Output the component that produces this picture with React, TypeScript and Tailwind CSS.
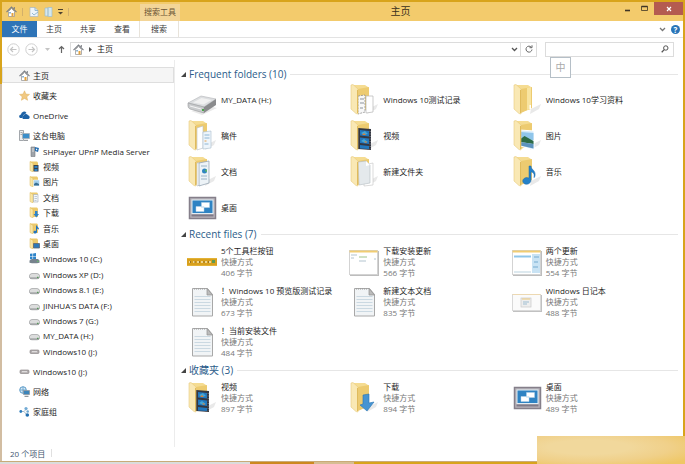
import type { ReactNode } from "react";

type Kind =
  | "drive" | "docs" | "reports" | "desktop" | "notes" | "video" | "blank" | "empty"
  | "picture" | "music" | "download" | "banner" | "text" | "shotA" | "shotB" | "shotC";

function FolderBase({ children }: { children?: ReactNode }) {
  return (
    <>
      <path d="M19 25 29 20 27 25 18 30z" fill="#e9e9e9" />
      <path d="M3 1h13l3 2v22l-10 3z" fill="#f5dc92" />
      <path d="M9 5l11-2v21l-11 5z" fill="#edcb70" />
      {children}
      <path d="M2 1l2-.5 5 4.500V30l-2-.5L2 25z" fill="#f9e8b4" stroke="#e8cb7c" strokeWidth=".6" />
      <path d="M8.500 6v23" stroke="#e0bb5c" strokeWidth="1" />
    </>
  );
}

function DesktopArt() {
  return (
    <>
      <rect x="2.500" y="5.500" width="26" height="21" fill="#b9b4bb" stroke="#857f8a" strokeWidth="1.500" />
      <rect x="5" y="8" width="21" height="13.500" fill="#2f83c3" stroke="#e2edf4" />
      <rect x="4.500" y="22.500" width="22" height="2" fill="#807a88" />
      <path d="M14.500 10.500h8v5h-8zM9 14.500h8v5H9z" fill="#fff" stroke="#b7d4ea" strokeWidth=".5" />
    </>
  );
}

function NotePage() {
  return (
    <>
      <path d="M5.500 2.500h15l5 6V30h-20z" fill="#f1f4f6" stroke="#a8a8a8" />
      <path d="M20 2.500v6.500h5.500z" fill="#bcbcbc" stroke="#8f8f8f" strokeWidth=".7" />
      <path d="M7.500 10.500h16M7.500 13.500h16M7.500 16.500h16M7.500 19.500h16M7.500 22.500h16M7.500 25.500h16" stroke="#cbd9e2" />
      <path d="M7 3h12" stroke="#999" strokeDasharray="1 1" />
    </>
  );
}

function BigIcon({ kind }: { kind: Kind }) {
  let art: ReactNode;
  switch (kind) {
    case "drive":
      art = (
        <>
          <path d="M4 27l11 4 15-7-4-1z" fill="#e9e9e9" />
          <path d="M1 19 14 12l15 3-12 8z" fill="#dcdee0" stroke="#b4b6b8" strokeWidth=".6" />
          <path d="M6 18.500 14.500 14l10 2-8 4.500z" fill="#f1f1f1" />
          <path d="M1 19l16 4v6L3 25q-2-1-2-3z" fill="#c9cbcd" stroke="#97999b" strokeWidth=".6" />
          <path d="M17 23l12-8v6l-12 8z" fill="#8a8b8d" />
          <path d="M3 22l11 3" stroke="#f4f4f4" />
          <rect x="15" y="25" width="2" height="2" fill="#49a648" />
        </>
      );
      break;
    case "docs":
      art = (
        <FolderBase>
          <path d="M10 8l6-2v22l-6 2z" fill="#fff" stroke="#b8c0c8" strokeWidth=".6" />
          <path d="M16 12l8-1v17l-8 1z" fill="#eef5fb" stroke="#a9bdcc" strokeWidth=".6" />
          <path d="M17.500 15h5M17.500 18h5M17.500 24h4" stroke="#8eb6d4" />
          <path d="M17.500 21h2" stroke="#e7a04b" />
        </FolderBase>
      );
      break;
    case "reports":
      art = (
        <FolderBase>
          <path d="M10 7l9-1v21l-9 3z" fill="#fff" stroke="#b5bcc4" strokeWidth=".6" />
          <path d="M12 7l10-2v22l-10 3z" fill="#edf3f7" stroke="#8e9eac" strokeWidth=".7" />
          <circle cx="17.500" cy="15" r="2.500" fill="#2f86c1" />
          <path d="M17.500 15l2.500 1v-3z" fill="#5fb768" />
          <path d="M14 10h6M14 20h6M14 23h6" stroke="#9ab3c6" />
        </FolderBase>
      );
      break;
    case "notes":
      art = (
        <FolderBase>
          <path d="M9 12l7-1v17l-7 2z" fill="#f8f8f8" stroke="#8f8f8f" strokeDasharray="2 1" strokeWidth=".8" />
          <path d="M17 12h7v16l-7 1z" fill="#fff" stroke="#b4b4b4" strokeWidth=".7" />
          <path d="M11 15h4M11 19h4M11 24h3" stroke="#8b939b" />
        </FolderBase>
      );
      break;
    case "blank":
      art = (
        <FolderBase>
          <path d="M15 9l9-2v22l-9 1z" fill="#fff" stroke="#c4c4c4" strokeWidth=".6" />
          <path d="M9 6l8-1 4 4v18l-11 2z" fill="#e4e9ec" stroke="#b4bcc1" strokeWidth=".6" />
          <path d="M17 5v5l4-1z" fill="#fff" />
        </FolderBase>
      );
      break;
    case "video":
      art = (
        <FolderBase>
          <path d="M9 8l13 1v21l-13-1z" fill="#343741" />
          <path d="M11 10l9 1v5.500l-9-1zM11 17.500l9 1V24l-9-1zM11 25l9 1v3l-9-.5z" fill="#2277bd" />
          <path d="M12 13l4-2 3 3-4 1zM12 21l3-2 4 3-3 1z" fill="#45a5d5" />
          <path d="M13 15l2-2 2 2zM15 22l2-1 1 2z" fill="#d5803a" />
          <path d="M21.200 11v18" stroke="#a8acb2" strokeDasharray="1 1.500" strokeWidth=".7" />
        </FolderBase>
      );
      break;
    case "picture":
      art = (
        <FolderBase>
          <path d="M8 10l14 1v19L8 26z" fill="#d5eafa" stroke="#fff" />
          <path d="M8.500 12l13 1v7l-13-1z" fill="#8fc5ea" />
          <path d="M8.500 19l4-3 9 5v3l-13-2z" fill="#2d6b45" />
          <path d="M8.500 22l13 2v4.500l-13-3z" fill="#5d93bd" />
        </FolderBase>
      );
      break;
    case "empty":
      art = (
        <FolderBase>
          <path d="M15 4l4-1v22l-4 1z" fill="#f8e4a0" />
          <path d="M17.500 21h1.500v4h-1.500z" fill="#fff" />
        </FolderBase>
      );
      break;
    case "music":
      art = (
        <>
          <FolderBase />
          <path
            d="M17 10h2c0 4 5 4 4 10-1 2-1 2-1 1 1-4-2-5-3-5v8c0 3-3 5-6 4-3-1-3-5 0-6 2-1 3 0 4 0z"
            fill="#2681c8"
            stroke="#1b68a9"
            strokeWidth=".5"
          />
        </>
      );
      break;
    case "download":
      art = (
        <>
          <FolderBase />
          <path d="M14 13l6-1v9l5-1-7 9-7-6 3-1z" fill="#4694d2" stroke="#2873b1" strokeWidth=".6" />
        </>
      );
      break;
    case "desktop":
      art = <DesktopArt />;
      break;
    case "text":
      art = <NotePage />;
      break;
    case "banner":
      art = (
        <>
          <rect y="12" width="30" height="8" fill="#d8a01d" />
          <path d="M0 12.500h30M0 19.500h30" stroke="#e3b236" />
          <path d="M2 16h25" stroke="#efd58d" strokeWidth="2" strokeDasharray="2 2" />
          <path d="M3 16h25" stroke="#9a7421" strokeDasharray="1 3.500" strokeWidth="2" />
          <rect x="25" y="14" width="3" height="3" fill="#5d9a52" />
        </>
      );
      break;
    case "shotA":
      art = (
        <>
          <rect x="1" y="5" width="29" height="25" fill="#bdbdbd" />
          <rect x=".5" y="4.500" width="28" height="24" fill="#fff" stroke="#d3d3d3" />
          <path d="M.5 5.500h28" stroke="#f1cd72" strokeWidth="2" />
          <path d="M2 9h6M2 12h3M10 15h7M25 13h2" stroke="#b3c4cf" />
          <path d="M10 11h8" stroke="#9ec48b" />
        </>
      );
      break;
    case "shotB":
      art = (
        <>
          <rect x="1" y="5" width="29" height="25" fill="#bdbdbd" />
          <rect x=".5" y="4.500" width="28" height="24" fill="#fff" stroke="#d3d3d3" />
          <path d="M.5 5.500h28" stroke="#f1cd72" strokeWidth="2" />
          <path d="M2 10.500h17" stroke="#8ec6ea" strokeWidth="2" />
          <path d="M20 8h8v19h-8z" fill="#c9e3f4" />
          <path d="M22 11h5M22 16h4M21 21h5" stroke="#75abd0" />
          <path d="M2 26h17" stroke="#dde9ef" strokeWidth="2" />
        </>
      );
      break;
    case "shotC":
      art = (
        <>
          <rect x="1" y="9" width="29" height="17" fill="#c1c1c1" />
          <rect x=".5" y="8.500" width="28" height="16" fill="#fbfbfb" stroke="#d9d9d9" />
          <path d="M.5 8.500h28" stroke="#edd9b2" />
          <rect x="9" y="12" width="10" height="9" fill="#eee" stroke="#c9c9c9" strokeWidth=".7" />
          <path d="M10 13h8" stroke="#ecc97b" />
          <path d="M11 16h6M11 18h4" stroke="#9ebdd1" />
        </>
      );
      break;
  }
  return (
    <svg viewBox="0 0 30 32" className="h-8 w-[30px] shrink-0" aria-hidden="true">
      {art}
    </svg>
  );
}

type SmallKind =
  | "home" | "star" | "cloud" | "pc" | "server" | "fVideo" | "fPicture" | "fDoc" | "fDown"
  | "fMusic" | "fDesk" | "windows" | "disk" | "usb" | "network" | "group";

function SmallIcon({ kind }: { kind: SmallKind }) {
  const folder = (
    <>
      <path d="M1 .5h7l1 1V10H3z" fill="#edca6c" />
      <path d="M1 .5l3 2V11l-3-1.500z" fill="#f9e6a7" stroke="#dfba5b" strokeWidth=".5" />
    </>
  );
  const art: Record<SmallKind, ReactNode> = {
    home: (
      <>
        <path d="M2.500 5.500V10.500h6V5.500l-3-3z" fill="#fff" stroke="#9b9b9b" strokeWidth=".8" />
        <path d="M.5 6.200 5.500 1l5 5.200M8.300 1v2" fill="none" stroke="#7b7f85" strokeWidth="1.100" />
        <path d="M5.500 7h2v3.500h-2z" fill="#e5a23c" />
        <path d="M3.300 6h1.500v1.500H3.300z" fill="#6a9fc6" />
      </>
    ),
    star: <path d="M5.500.8l1.400 3.300 3.600.3-2.700 2.400.8 3.500-3.100-1.900-3.100 1.900.8-3.500L.5 4.400l3.600-.3z" fill="#f1c982" stroke="#dfb05f" strokeWidth=".5" />,
    cloud: (
      <>
        <path d="M1 8a2 2 0 0 1 1-3.600A3 3 0 0 1 7.500 3L4.500 5 3 8z" fill="#1d62a6" />
        <path d="M4 9a2 2 0 0 1 .5-3.500 2.500 2.500 0 0 1 4.500-.3A2 2 0 0 1 9.500 9z" fill="#1d62a6" />
      </>
    ),
    pc: (
      <>
        <path d="M.5.5h4v10h-4z" fill="#eee" stroke="#8d9298" strokeWidth=".8" />
        <path d="M1.500 2.500h2M1.500 4.500h2" stroke="#777" strokeWidth=".6" />
        <path d="M3.500 3.500h7v5h-7z" fill="#3c8ec9" stroke="#a4afb8" strokeWidth=".8" />
        <path d="M5 10.300h4" stroke="#85898e" />
      </>
    ),
    server: (
      <>
        <path d="M2 1h4v9.500H2z" fill="#9fa4aa" stroke="#75797f" strokeWidth=".6" />
        <path d="M3 3h2M3 5h2" stroke="#eee" strokeWidth=".8" />
        <path d="M6 1l4 1-1 4-3-1z" fill="#2871b4" />
        <path d="M7 2.500l1.500 1L7 4.500z" fill="#fff" />
      </>
    ),
    fVideo: <>{folder}<path d="M4.500 4h5v6.500h-5z" fill="#3c414c" /><path d="M5.500 5h3v2h-3zM5.500 8h3v2h-3z" fill="#2d82c4" /></>,
    fPicture: <>{folder}<path d="M4.500 4h6v6h-6z" fill="#a6d1ee" stroke="#fff" strokeWidth=".5" /><path d="M5 8l2-1.500L10 8v1.500H5z" fill="#3a7094" /></>,
    fDoc: <>{folder}<path d="M4.500 2.500h4.500V10H4.500z" fill="#f3f6f9" stroke="#a3acb5" strokeWidth=".6" /><path d="M5.500 4.500h2.500M5.500 6.500h2.500M5.500 8.500h2" stroke="#9ab0c2" strokeWidth=".6" /></>,
    fDown: <>{folder}<path d="M6 4h2.500v3H10l-2.700 3.500L4.500 7H6z" fill="#2d82c8" /></>,
    fMusic: <>{folder}<path d="M7 2.500h1c0 1.500 2.500 2 2 4.500-.5-1-1-1.200-2-1.200V9c-.5 2-3.500 2-3.500 0 0-1.200 1.500-1.500 2.500-1z" fill="#2474bd" /></>,
    fDesk: <>{folder}<path d="M4.500 5.500h6v4.500h-6z" fill="#2d78b7" stroke="#5c6470" strokeWidth=".8" /></>,
    windows: (
      <>
        <path d="M1 .8l2.500-.3v2.700H1zM4.100.4L7 0v3.200H4.100zM1 3.800h2.500v2.700L1 6.200zM4.100 3.800H7V7l-2.900-.4z" fill="#2e84c9" />
        <path d="M.5 7.500L3 6h6l1.500 1.500v2.200q-5 1-10 0z" fill="#77838d" />
        <path d="M8 8.300h1.500" stroke="#63c864" />
      </>
    ),
    disk: (
      <>
        <path d="M.5 6.500Q1 4.500 3 4.500h5q2 0 2.500 2v2Q10 9.800 8 9.800H3Q1 9.800.5 8.500z" fill="#dcdddd" stroke="#909294" strokeWidth=".6" />
        <path d="M1 9h9" stroke="#85888b" strokeWidth=".9" />
        <path d="M8 8.300h1.500" stroke="#3e9141" />
      </>
    ),
    usb: (
      <>
        <rect x="1" y="4" width="9" height="3.500" rx="1" fill="#b4afb0" stroke="#7f7b7c" strokeWidth=".6" />
        <path d="M3 5.700h5" stroke="#f6f6f6" strokeWidth=".8" />
      </>
    ),
    network: (
      <>
        <circle cx="4" cy="4" r="3.300" fill="#d7eaf6" stroke="#3c86bd" strokeWidth=".8" />
        <path d="M1 4h6M4 .7v6.600" stroke="#3c86bd" strokeWidth=".6" />
        <path d="M4.500 4.500h6v4h-6z" fill="#3b84ba" stroke="#8f989f" strokeWidth=".8" />
        <path d="M5.500 10.300h4" stroke="#777d83" />
      </>
    ),
    group: (
      <>
        <path d="M2 5.500h3l3-3M5 5.500L8 9" stroke="#a5bccd" fill="none" />
        <circle cx="1.800" cy="5.500" r="1.400" fill="#2d7dbd" />
        <circle cx="7" cy="2.500" r="1.600" fill="#72abd5" />
        <circle cx="8.700" cy="5.500" r="1.300" fill="#6fa7cf" />
        <circle cx="8.300" cy="9" r="1.800" fill="#236fb0" />
      </>
    ),
  };
  return (
    <svg viewBox="0 0 11 11" className="size-[11px] shrink-0" aria-hidden="true">
      {art[kind]}
    </svg>
  );
}

function Chevron({ tone }: { tone: string }) {
  return (
    <svg viewBox="0 0 7 5" className="h-[5px] w-[7px] shrink-0" aria-hidden="true">
      <path d="M1 1l2.500 2.500L6 1" fill="none" stroke={tone} strokeWidth="1.300" />
    </svg>
  );
}

const tree: [SmallKind, string][] = [
  ["server", "SHPlayer UPnP Media Server"],
  ["fVideo", "视频"],
  ["fPicture", "图片"],
  ["fDoc", "文档"],
  ["fDown", "下载"],
  ["fMusic", "音乐"],
  ["fDesk", "桌面"],
  ["windows", "Windows 10 (C:)"],
  ["disk", "Windows XP (D:)"],
  ["disk", "Windows 8.1 (E:)"],
  ["disk", "JINHUA'S DATA (F:)"],
  ["disk", "Windows 7 (G:)"],
  ["disk", "MY_DATA (H:)"],
  ["usb", "Windows10 (J:)"],
];

function RootLink({ icon, label }: { icon: SmallKind; label: string }) {
  return (
    <a href="#" className="flex h-[15px] items-center gap-[3px] pl-[17px]">
      <SmallIcon kind={icon} />
      {label}
    </a>
  );
}

type Item = { icon: Kind; name: string; size?: string };

const sections: { title: string; items: Item[] }[] = [
  {
    title: "Frequent folders (10)",
    items: [
      { icon: "drive", name: "MY_DATA (H:)" },
      { icon: "notes", name: "Windows 10测试记录" },
      { icon: "empty", name: "Windows 10学习资料" },
      { icon: "docs", name: "稿件" },
      { icon: "video", name: "视频" },
      { icon: "picture", name: "图片" },
      { icon: "reports", name: "文档" },
      { icon: "blank", name: "新建文件夹" },
      { icon: "music", name: "音乐" },
      { icon: "desktop", name: "桌面" },
    ],
  },
  {
    title: "Recent files (7)",
    items: [
      { icon: "banner", name: "5个工具栏按钮", size: "406 字节" },
      { icon: "shotA", name: "下载安装更新", size: "566 字节" },
      { icon: "shotB", name: "两个更新", size: "554 字节" },
      { icon: "text", name: "！Windows 10 预览版测试记录", size: "673 字节" },
      { icon: "text", name: "新建文本文档", size: "835 字节" },
      { icon: "shotC", name: "Windows 日记本", size: "488 字节" },
      { icon: "text", name: "！当前安装文件", size: "484 字节" },
    ],
  },
  {
    title: "收藏夹 (3)",
    items: [
      { icon: "video", name: "视频", size: "897 字节" },
      { icon: "download", name: "下载", size: "894 字节" },
      { icon: "desktop", name: "桌面", size: "489 字节" },
    ],
  },
];

function Section({ title, items }: { title: string; items: Item[] }) {
  return (
    <section>
      <h2 className="flex h-4 items-center gap-1 pr-[5px] pl-[6px] text-[10px] text-[#2b5c8a]">
        <button type="button" className="flex items-center gap-[3px]">
          <svg viewBox="0 0 5 5" className="size-[5px]" aria-hidden="true">
            <path d="M5 0v5H0z" fill="#444" />
          </svg>
          {title}
        </button>
        <span className="h-px flex-1 bg-[#e6e6e6]" />
      </h2>
      <ul className="grid grid-cols-3 pr-[9px] pl-3">
        {items.map((item) => (
          <li key={item.name}>
            <a href="#" className={item.size ? "flex h-10 items-center gap-1" : "flex h-9 items-center gap-1"}>
              <BigIcon kind={item.icon} />
              <span className="flex flex-col pb-[2px] leading-[11px] whitespace-nowrap">
                <span>{item.name}</span>
                {item.size && <span className="text-[#777]">快捷方式</span>}
                {item.size && <span className="text-[#777]">{item.size}</span>}
              </span>
            </a>
          </li>
        ))}
      </ul>
    </section>
  );
}

export default function App() {
  return (
    <div className="relative flex min-h-screen flex-col overflow-hidden bg-[#d8a41c] pt-[2px] font-['Open_Sans','Noto_Sans_CJK_SC',sans-serif] text-[8px] leading-[11px] text-[#1c1c1c]">
      <div className="flex flex-1 bg-[linear-gradient(to_right,transparent_50%,#d8a41c_50%),linear-gradient(to_bottom,#d8a41c_82px,#d2bda2_82px)] pr-[2px] pl-[2px]">
        <div className="flex min-w-0 flex-1 flex-col bg-white">
          <header className="relative flex h-[19px] items-center bg-[#f3cb6c]">
            <div className="flex flex-1 items-center gap-[5px] pl-1">
              <SmallIcon kind="home" />
              <span className="h-2 w-px bg-[#d3b06a]" />
              <button type="button" aria-label="属性" className="pl-[1px]">
                <svg viewBox="0 0 10 10" className="size-[10px]" aria-hidden="true">
                  <path d="M1 .5h5l3 3v6H1z" fill="#edf4f8" stroke="#a9b7be" strokeWidth=".7" />
                  <path d="M6 .5v3h3M3 6l2 2 4-3" fill="none" stroke="#7fa9c7" strokeWidth=".8" />
                </svg>
              </button>
              <button type="button" aria-label="新建文件夹">
                <svg viewBox="0 0 9 10" className="h-[10px] w-[9px]" aria-hidden="true">
                  <path d="M1 1h3v8H1zM4 .5h4v9H4z" fill="#d5e8ef" stroke="#9ebccb" strokeWidth=".7" />
                </svg>
              </button>
              <button type="button" aria-label="自定义快速访问工具栏">
                <svg viewBox="0 0 5 6" className="h-[6px] w-[5px]" aria-hidden="true">
                  <path d="M0 .5h5" stroke="#4d4130" />
                  <path d="M0 3h5L2.500 5.500z" fill="#4d4130" />
                </svg>
              </button>
              <span className="h-2 w-px bg-[#d3b06a]" />
            </div>
            <div className="absolute bottom-0 left-[138px] flex h-[17px] w-[40px] items-center justify-center bg-[#f3d598] pb-[2px] whitespace-nowrap text-[#6b5436]">
              搜索工具
            </div>
            <h1 className="pl-28 text-[10px] text-[#3a2f1c]">主页</h1>
            <div className="flex flex-1 items-start justify-end self-stretch">
              <button type="button" aria-label="最小化" className="flex h-[13px] w-[15px] items-center justify-center">
                <svg viewBox="0 0 7 7" className="size-[7px]" aria-hidden="true">
                  <path d="M1 5.500h5" stroke="#3f3526" strokeWidth="1.600" />
                </svg>
              </button>
              <button type="button" aria-label="最大化" className="flex h-[13px] w-[19px] items-center justify-center">
                <svg viewBox="0 0 7 7" className="size-[7px]" aria-hidden="true">
                  <path d="M.5 1.500h6" stroke="#3f3526" strokeWidth="1.500" />
                  <path d="M.5 1.500h6v4h-6z" fill="none" stroke="#3f3526" strokeWidth=".8" />
                </svg>
              </button>
              <button type="button" aria-label="关闭" className="flex h-[13px] w-[29px] items-center justify-center bg-[#b45b50]">
                <svg viewBox="0 0 6 6" className="size-[6px]" aria-hidden="true">
                  <path d="M1 1l4 4M5 1L1 5" stroke="#fff" strokeWidth="1.200" />
                </svg>
              </button>
            </div>
          </header>

          <nav aria-label="功能区" className="flex h-[17px] items-stretch border-b border-[#e3e3e3] text-[#3a3a3a]">
            <button type="button" className="w-[35px] bg-[#2e74b7] pb-[2px] text-white">文件</button>
            <button type="button" className="w-[34px] pb-[2px]">主页</button>
            <button type="button" className="w-[34px] pb-[2px]">共享</button>
            <button type="button" className="w-[34px] pb-[2px]">查看</button>
            <button type="button" className="w-[40px] border-x border-[#e8e3da] pb-[2px]">搜索</button>
            <div className="ml-auto flex items-center gap-[5px] pr-[3px]">
              <button type="button" aria-label="展开功能区">
                <Chevron tone="#777" />
              </button>
              <button type="button" aria-label="帮助" className="flex size-[9px] items-center justify-center rounded-full bg-[#2874b8] font-bold text-white">
                ?
              </button>
            </div>
          </nav>

          <div className="flex h-[22px] items-center pr-[9px] pl-[5px]">
            <button type="button" aria-label="后退">
              <svg viewBox="0 0 13 13" className="size-[13px]" aria-hidden="true">
                <circle cx="6.500" cy="6.500" r="5.700" fill="#fff" stroke="#cfcfcf" />
                <path d="M9.500 6.500h-6M6 4L3.500 6.500 6 9" fill="none" stroke="#c4c4c4" strokeWidth="1.200" />
              </svg>
            </button>
            <button type="button" aria-label="前进" className="ml-[5px]">
              <svg viewBox="0 0 13 13" className="size-[13px]" aria-hidden="true">
                <circle cx="6.500" cy="6.500" r="5.700" fill="#fff" stroke="#cfcfcf" />
                <path d="M3.500 6.500h6M7 4l2.500 2.500L7 9" fill="none" stroke="#c4c4c4" strokeWidth="1.200" />
              </svg>
            </button>
            <button type="button" aria-label="最近位置" className="ml-[7px]">
              <svg viewBox="0 0 5 3" className="h-[3px] w-[5px]" aria-hidden="true">
                <path d="M0 0h5L2.500 3z" fill="#c4c4c4" />
              </svg>
            </button>
            <button type="button" aria-label="上移" className="ml-[8px]">
              <svg viewBox="0 0 7 8" className="h-2 w-[7px]" aria-hidden="true">
                <path d="M3.500 8V1.500M1 4l2.500-2.500L6 4" fill="none" stroke="#666" strokeWidth="1.200" />
              </svg>
            </button>
            <div className="ml-[5px] flex h-[15px] flex-1 items-center border border-[#dcdcdc] pl-[2px]">
              <SmallIcon kind="home" />
              <svg viewBox="0 0 3 5" className="mr-[5px] ml-[5px] h-[5px] w-[3px]" aria-hidden="true">
                <path d="M0 0l3 2.500L0 5z" fill="#555" />
              </svg>
              <button type="button" className="pb-[2px]">主页</button>
              <button type="button" aria-label="历史记录" className="mr-[2px] ml-auto">
                <Chevron tone="#555" />
              </button>
              <button type="button" aria-label="刷新" className="flex w-4 items-center justify-center self-stretch border-l border-[#dcdcdc]">
                <svg viewBox="0 0 8 8" className="size-2" aria-hidden="true">
                  <path d="M6.300 2.200A3 3 0 1 0 7 4.500" fill="none" stroke="#666" />
                  <path d="M4.500 2.700H7V.3" fill="none" stroke="#666" />
                </svg>
              </button>
            </div>
            <div className="ml-2 flex h-[15px] w-[129px] items-center border border-[#dcdcdc] pr-1">
              <input type="search" aria-label="搜索" className="min-w-0 flex-1 outline-none" />
              <svg viewBox="0 0 8 8" className="size-2" aria-hidden="true">
                <circle cx="4.800" cy="3" r="2.200" fill="none" stroke="#555" />
                <path d="M3.200 4.600L.7 7.300" stroke="#555" strokeWidth="1.300" />
              </svg>
            </div>
          </div>

          <div className="flex flex-1">
            <nav aria-label="导航窗格" className="flex w-[173px] shrink-0 flex-col gap-[5px] border-r border-[#ececec] pt-[7px] whitespace-nowrap">
              <a href="#" aria-current="page" className="flex h-4 items-center gap-[3px] border border-[#dedede] bg-[#f5f5f5] pl-4">
                <SmallIcon kind="home" />
                主页
              </a>
              <RootLink icon="star" label="收藏夹" />
              <RootLink icon="cloud" label="OneDrive" />
              <ul className="grid h-[231px] auto-rows-fr">
                <li className="flex flex-col justify-center">
                  <RootLink icon="pc" label="这台电脑" />
                </li>
                {tree.map(([icon, label]) => (
                  <li key={label} className="flex items-center pl-[27px]">
                    <a href="#" className="flex items-center gap-[3px]">
                      <SmallIcon kind={icon} />
                      {label}
                    </a>
                  </li>
                ))}
              </ul>
              <RootLink icon="usb" label="Windows10 (J:)" />
              <RootLink icon="network" label="网络" />
              <RootLink icon="group" label="家庭组" />
            </nav>
            <main className="min-w-0 flex-1 pt-[6px]">
              {sections.map((s) => (
                <Section key={s.title} {...s} />
              ))}
            </main>
          </div>

          <footer className="flex h-[14px] items-center gap-[6px] pb-[2px] pl-2 text-[#3f5570]">
            20 个项目
            <span className="h-2 w-px bg-[#e0e0e0]" />
          </footer>
        </div>
      </div>
      <div className="flex h-[3px] border-t border-[#c9ab78]">
        <span className="w-[250px] bg-[#dadcdc]" />
        <span className="w-[64px] bg-[#cd881f]" />
        <span className="w-[40px] bg-[#d6bd93]" />
        <span className="flex-1 bg-[#d8a41c]" />
      </div>

      <div className="absolute top-[57px] left-[550px] flex size-[21px] items-center justify-center border border-[#b5bfc7] bg-white text-[10px] text-[#aaa]">
        中
      </div>
      <div className="absolute right-0 bottom-0 h-7 w-[148px] bg-[radial-gradient(ellipse_at_35%_40%,#f1d89c_30%,#f0d089_60%,#efc765_90%)]" />
    </div>
  );
}
